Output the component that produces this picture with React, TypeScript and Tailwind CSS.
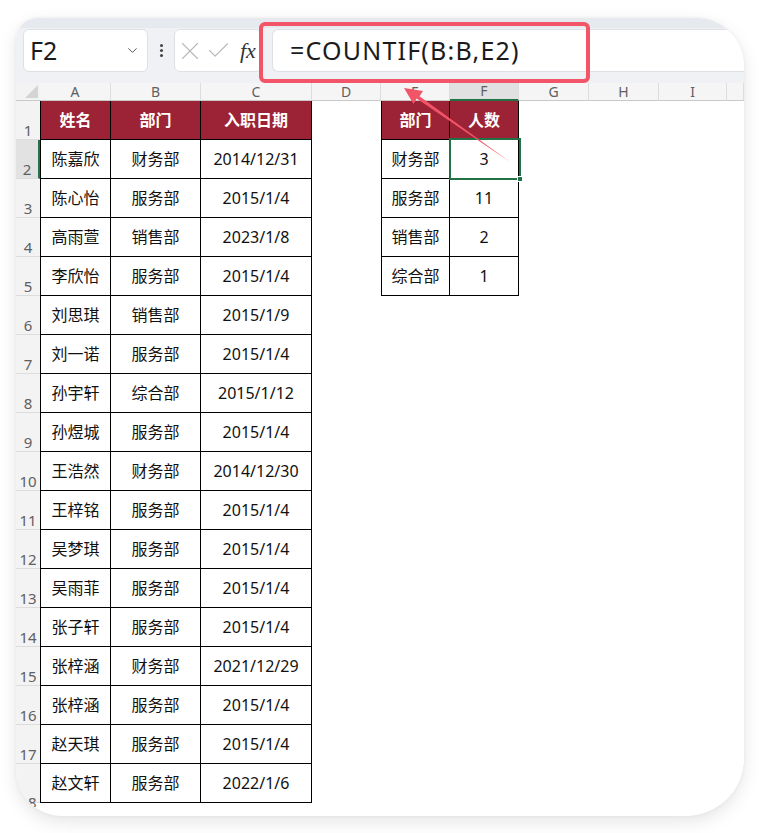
import React from 'react';
import { ChevronDown, X, Check } from 'lucide-react';

const staff: [string, string, string][] = [
  ['陈嘉欣', '财务部', '2014/12/31'],
  ['陈心怡', '服务部', '2015/1/4'],
  ['高雨萱', '销售部', '2023/1/8'],
  ['李欣怡', '服务部', '2015/1/4'],
  ['刘思琪', '销售部', '2015/1/9'],
  ['刘一诺', '服务部', '2015/1/4'],
  ['孙宇轩', '综合部', '2015/1/12'],
  ['孙煜城', '服务部', '2015/1/4'],
  ['王浩然', '财务部', '2014/12/30'],
  ['王梓铭', '服务部', '2015/1/4'],
  ['吴梦琪', '服务部', '2015/1/4'],
  ['吴雨菲', '服务部', '2015/1/4'],
  ['张子轩', '服务部', '2015/1/4'],
  ['张梓涵', '财务部', '2021/12/29'],
  ['张梓涵', '服务部', '2015/1/4'],
  ['赵天琪', '服务部', '2015/1/4'],
  ['赵文轩', '服务部', '2022/1/6'],
];

const summary: [string, string][] = [
  ['财务部', '3'],
  ['服务部', '11'],
  ['销售部', '2'],
  ['综合部', '1'],
];

const cols = ['A', 'B', 'C', 'D', 'E', 'F', 'G', 'H', 'I', ''];

const headCell = 'flex items-center justify-center bg-[#9c2335] text-white font-bold border-r border-b border-black';
const dataCell = 'flex items-center justify-center bg-white text-[#111] border-r border-b border-black';

function Cell({ r, c }: { r: number; c: number }) {
  // r: 1-based sheet row, c: 0-based column index (A=0)
  if (c <= 2) {
    const first = c === 0 ? ' border-l' : '';
    if (r === 1) {
      const label = ['姓名', '部门', '入职日期'][c];
      return <div className={headCell + first}>{label}</div>;
    }
    const row = staff[r - 2];
    if (!row) return <div />;
    return <div className={dataCell + first}>{row[c]}</div>;
  }
  if ((c === 4 || c === 5) && r <= 5) {
    const first = c === 4 ? ' border-l' : '';
    if (r === 1) {
      return <div className={headCell + first}>{c === 4 ? '部门' : '人数'}</div>;
    }
    return <div className={dataCell + first}>{summary[r - 2][c - 4]}</div>;
  }
  return <div className="bg-white" />;
}

export default function App() {
  const rows = Array.from({ length: 18 }, (_, i) => i + 1);

  return (
    <div className="relative w-[760px] h-[833px] bg-white pt-[18px] pl-[16px] font-['Noto_Sans','Noto_Sans_CJK_SC',sans-serif]">
      <div className="w-[728px] h-[798px] bg-white overflow-hidden rounded-tl-[22px] rounded-tr-[48px] rounded-br-[58px] rounded-bl-[46px] shadow-[0_6px_18px_rgba(0,0,0,0.10),0_0_4px_rgba(0,0,0,0.05)] flex flex-col">
        {/* formula bar */}
        <div className="h-[65px] shrink-0 bg-[#eff1f4] border-t-[10px] border-[#e6e9ed] flex items-start pt-[1px]">
          <div className="ml-[7px] w-[125px] h-[43px] bg-white rounded-[6px] border border-[#dde0e4] flex items-center justify-between pl-[6px] pr-[7px]">
            <span className="text-[25px] leading-none text-[#1b1b1b]">F2</span>
            <ChevronDown size={15} strokeWidth={1.6} className="text-[#555]" />
          </div>
          <div className="ml-[12px] h-[43px] flex flex-col justify-center gap-[2px]">
            <span className="w-[3px] h-[3px] bg-[#444] rounded-full" />
            <span className="w-[3px] h-[3px] bg-[#444] rounded-full" />
            <span className="w-[3px] h-[3px] bg-[#444] rounded-full" />
          </div>
          <div className="ml-[11px] w-[88px] h-[43px] bg-white rounded-[6px] border border-[#dde0e4] flex items-center">
            <X size={30} strokeWidth={0.9} className="text-[#b8b8b8]" />
            <Check size={27} strokeWidth={1} className="text-[#b8b8b8]" />
            <span className="ml-[8px] text-[22px] italic font-['Liberation_Serif',serif] text-[#333] leading-none">fx</span>
          </div>
          <div className="ml-[10px] flex-1 h-[43px] bg-white rounded-l-[6px] border border-r-0 border-[#dde0e4] flex items-center pl-[17px]">
            <span className="text-[25px] tracking-[1.2px] leading-none text-[#1b1b1b]">=COUNTIF(B:B,E2)</span>
          </div>
        </div>

        {/* sheet */}
        <div className="grid grid-cols-[24px_71px_90px_111px_69px_69px_69px_70px_70px_68px_1fr] grid-rows-[18px_repeat(18,39px)] flex-1 content-start">
          <div className="bg-[#f3f3f3] border-b border-[#c9c9c9] flex items-end justify-end pr-[2px] pb-[2px]">
            <svg width="13" height="13" viewBox="0 0 13 13">
              <polygon points="13,0 13,13 0,13" fill="#d4d4d4" />
            </svg>
          </div>
          {cols.map((l, i) => (
            <div
              key={'h' + i}
              className={
                'flex items-center justify-center text-[14px] leading-none text-[#606060] border-r border-[#dddddd] ' +
                (l === 'F' ? 'bg-[#e1e1e1] border-b-2 border-b-[#217346]' : 'bg-[#f5f5f5] border-b border-b-[#c9c9c9]')
              }
            >
              {l}
            </div>
          ))}
          {rows.map((r) => (
            <React.Fragment key={r}>
              <div
                className={
                  'flex items-end justify-center pb-[1px] text-[15px] leading-none text-[#606060] border-b border-[#dcdcdc] ' +
                  (r === 2 ? 'bg-[#e2e2e2] border-r-2 border-r-[#217346]' : 'bg-[#f3f3f3]')
                }
              >
                <span className={r === 18 ? 'translate-y-[9px]' : ''}>{r}</span>
              </div>
              {cols.map((_, c) => (
                <div key={c} className="contents text-[16px]">
                  <Cell r={r} c={c} />
                </div>
              ))}
            </React.Fragment>
          ))}
        </div>
      </div>

      {/* selected cell F2 */}
      <div className="absolute left-[449px] top-[138px] w-[72px] h-[42px] border-2 border-[#217346] pointer-events-none">
        <span className="absolute -right-[4px] -bottom-[4px] w-[6px] h-[6px] bg-[#217346] border border-white" />
      </div>

      {/* highlight box round the formula */}
      <div className="absolute left-[259px] top-[22px] w-[331px] h-[61px] border-[4px] border-[#f25468] rounded-[6px] pointer-events-none" />

      {/* arrow */}
      <svg className="absolute left-0 top-0 pointer-events-none" width="760" height="833">
        <polygon
          points="404,88 423,91 419.5,96.2 510,162 416.6,98.6 413.5,104"
          fill="#f25468"
        />
      </svg>
    </div>
  );
}
